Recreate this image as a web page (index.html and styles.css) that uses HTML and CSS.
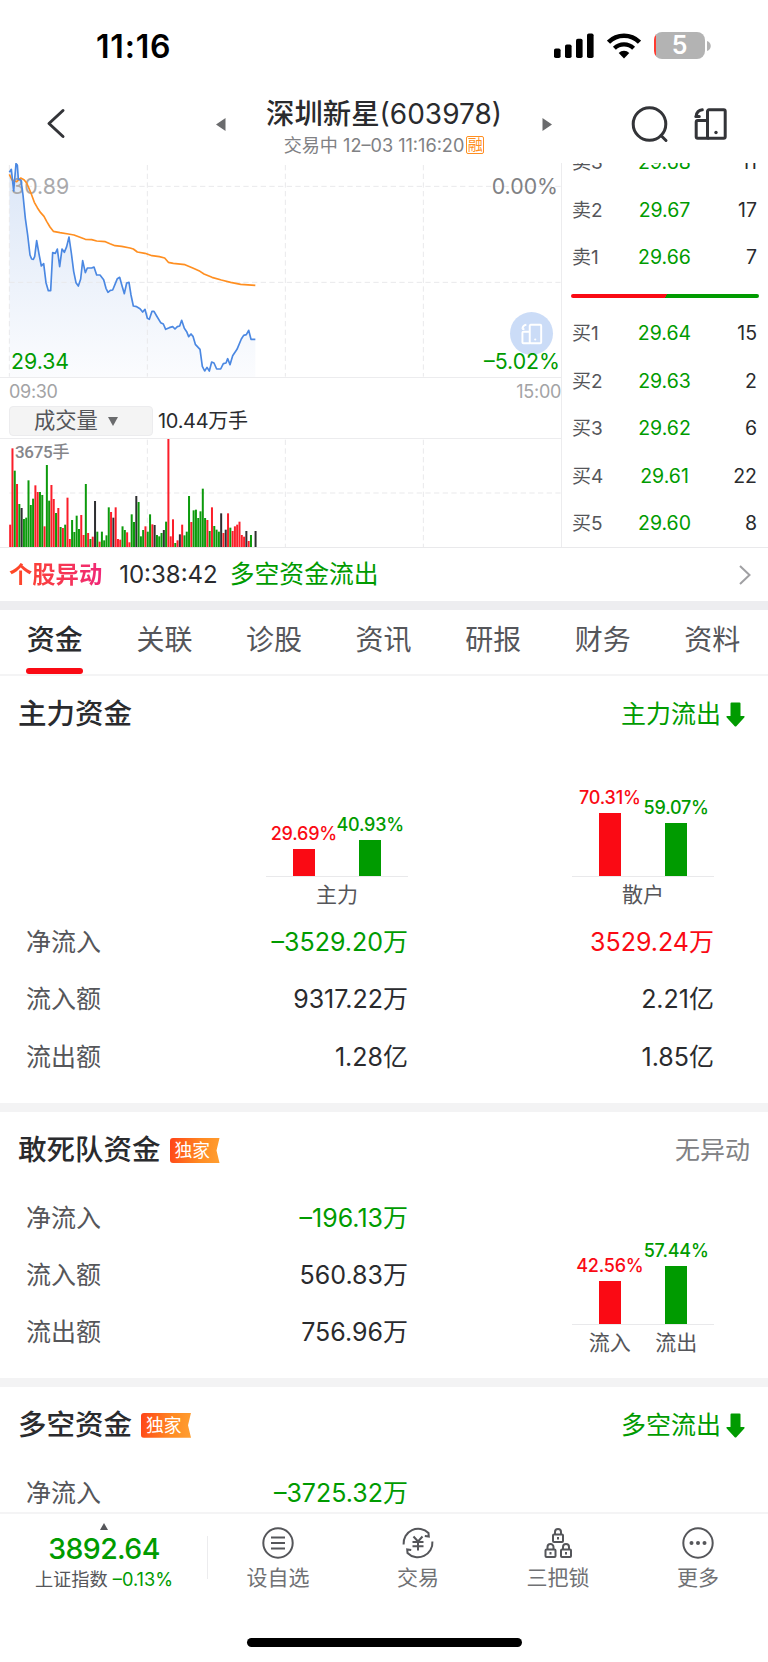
FILE: index.html
```html
<!DOCTYPE html>
<html lang="zh-CN">
<head>
  <meta charset="UTF-8">
  <title>深圳新星(603978)</title>
  <link rel="stylesheet" href="styles.css">
</head>
<body>

<!-- Status bar -->
<div class="status">
  <span class="time">11:16</span>
  <div class="status-icons">
    <svg width="40" height="26" viewBox="0 0 40 26">
      <rect x="0" y="15.5" width="6.6" height="9.5" rx="1.8"/>
      <rect x="11" y="11.5" width="6.6" height="13.5" rx="1.8"/>
      <rect x="22" y="5.8" width="6.6" height="19.2" rx="1.8"/>
      <rect x="33" y="0.5" width="6.6" height="24.5" rx="1.8"/>
    </svg>
    <svg class="wifi" width="34" height="26" viewBox="0 0 34 26">
      <path d="M1.500 9.200a22 22 0 0 1 31 0" fill="none" stroke="#000" stroke-width="4.600"/>
      <path d="M7.4 15.300a13.700 13.700 0 0 1 19.200 0" fill="none" stroke="#000" stroke-width="4.200"/>
      <path d="M17 25.500l-5.300-5.600a7.600 7.600 0 0 1 10.600 0z"/>
    </svg>
    <div class="battery">5</div>
    <svg width="4" height="10" viewBox="0 0 4 10"><path d="M0 0c5 1.800 5 8.200 0 10z" fill="#b3b3b3"/></svg>
  </div>
</div>

<!-- Stock title -->
<div class="nav">
  <svg class="back" width="20" height="32" viewBox="0 0 20 32"><path d="M17 3L3 16l14 13" transform="translate(0 .5)"/></svg>
  <svg class="prev" width="10" height="13" viewBox="0 0 10 13"><path d="M9.500 0v13L0 6.500z"/></svg>
  <div class="nav-title">
    <div class="stock">深圳新星<span class="code">(603978)</span></div>
    <div class="stock-sub">交易中 12–03 11:16:20<span class="rong">融</span></div>
  </div>
  <svg class="next" width="10" height="13" viewBox="0 0 10 13"><path d="M.5 0v13L10 6.500z"/></svg>
  <svg class="search" width="38" height="38" viewBox="0 0 38 38"><circle cx="18.500" cy="18" r="16.300"/><path d="M30 29.500l5 5"/></svg>
  <svg class="layout" width="34" height="34" viewBox="0 0 34 34">
    <rect x="13.500" y="2.800" width="17.700" height="28.500" rx="1.500"/>
    <path d="M13.500 13.500H3.700a1.500 1.500 0 0 0-1.500 1.500v14.800a1.500 1.500 0 0 0 1.500 1.500H14M1.800 9.500h3.500M2.200 9C2.600 5.600 4.800 3.200 8.300 2.800"/>
    <circle class="dot" cx="22" cy="25.500" r="1.700"/>
  </svg>
</div>

<div class="quote">
  <div class="charts">
    <!-- Price chart -->
    <div class="price-chart">
      <svg width="562" height="215" viewBox="0 24 1686 645">
        <defs>
          <linearGradient id="area" x1="0" y1="0" x2="0" y2="1">
            <stop offset="0" stop-color="#dbe6f7"/>
            <stop offset="1" stop-color="#fbfcfe"/>
          </linearGradient>
        </defs>
        <path id="areaPath" fill="url(#area)"/>
        <g class="grid-lines">
          <path d="M28 30V665M442 30V665M856 30V665M1270 30V665"/>
          <path d="M28 94H1684M28 382H1684"/>
        </g>
      </svg>
      <span class="label high">30.89</span>
      <span class="label pct-high">0.00%</span>
      <span class="label low">29.34</span>
      <svg class="lines" width="562" height="215" viewBox="0 24 1686 645">
        <polyline id="avgLine" stroke="#ff8f21" points="28,58 36,75 50,80 62,69 72,74 80,84 92,112 103,142 112,158 122,173 132,184 140,199 150,216 160,229 180,233 205,237 222,240 240,247 256,253 275,254 290,258 316,260 330,266 345,272 365,274 390,279 400,282 412,291 435,295 456,302 478,305 494,309 505,322 520,325 555,329 580,340 600,349 612,357 636,367 664,375 692,382 722,388 766,391"/>
        <polyline id="priceLine" stroke="#4b88e2" points="28,52 34,43 41,108 48,26 52,30 55,73 63,76 69,120 76,190 83,240 90,300 95,312 100,313 104,305 110,257 117,297 124,333 131,326 138,383 145,407 152,407 158,293 166,295 172,282 179,335 186,282 193,292 200,275 207,246 214,294 221,349 228,383 235,393 242,372 248,317 256,353 262,339 275,339 282,336 290,360 300,360 311,374 318,400 324,412 331,406 338,405 345,388 352,371 359,367 366,392 373,416 380,384 387,382 393,420 400,453 410,455 420,461 428,471 435,463 442,490 448,493 456,469 462,469 470,483 482,503 490,507 497,523 508,518 518,515 525,522 532,515 539,513 545,496 553,520 560,530 566,545 573,537 579,544 586,568 600,583 607,634 614,648 621,637 628,648 635,621 642,624 650,642 662,642 670,626 678,624 683,611 690,629 698,602 711,583 724,552 731,541 739,539 746,526 753,553 766,553"/>
      </svg>
      <div class="float-btn">
        <svg width="22" height="22" viewBox="0 0 34 34">
          <rect x="13.500" y="2.800" width="17.700" height="28.500" rx="1.500"/>
          <path d="M13.500 13.500H3.700a1.500 1.500 0 0 0-1.500 1.500v14.800a1.500 1.500 0 0 0 1.500 1.500H14M1.800 9.500h3.500M2.200 9C2.600 5.600 4.800 3.200 8.300 2.800"/>
          <circle class="dot" cx="22" cy="25.500" r="1.700"/>
        </svg>
      </div>
      <span class="label pct-low">–5.02%</span>
    </div>
    <div class="axis"><span>09:30</span><span>15:00</span></div>
    <div class="vol-head">
      <div class="vol-select">成交量<svg width="10" height="9" viewBox="0 0 10 9"><path d="M0 0h10L5 9z" fill="#6a6b6d"/></svg></div>
      <span class="vol-total">10.44万手</span>
    </div>
    <!-- Volume chart -->
    <div class="vol-chart">
      <svg width="562" height="108" viewBox="0 192 1686 324">
        <g class="grid-lines">
          <path d="M442 194V516M856 194V516M1270 194V516"/>
          <path d="M28 354H1684"/>
        </g>
        <g id="volBars"></g>
      </svg>
      <span class="vol-max">3675手</span>
    </div>
  </div>

  <!-- Order book -->
  <div class="book">
    <div class="book-row"><span>卖3</span><b>29.68</b><i>11</i></div>
    <div class="book-row"><span>卖2</span><b>29.67</b><i>17</i></div>
    <div class="book-row"><span>卖1</span><b>29.66</b><i>7</i></div>
    <div class="ratio"></div>
    <div class="book-row"><span>买1</span><b>29.64</b><i>15</i></div>
    <div class="book-row"><span>买2</span><b>29.63</b><i>2</i></div>
    <div class="book-row"><span>买3</span><b>29.62</b><i>6</i></div>
    <div class="book-row"><span>买4</span><b>29.61</b><i>22</i></div>
    <div class="book-row"><span>买5</span><b>29.60</b><i>8</i></div>
  </div>
</div>

<div class="alert">
  <span class="alert-tag">个股异动</span>
  <span class="alert-time">10:38:42</span>
  <span class="alert-text">多空资金流出</span>
  <svg width="14" height="24" viewBox="0 0 14 24"><path d="M2 3l9.500 9L2 21" fill="none" stroke="#a0a0a3" stroke-width="2"/></svg>
</div>

<div class="tabs">
  <span class="tab active">资金</span>
  <span class="tab">关联</span>
  <span class="tab">诊股</span>
  <span class="tab">资讯</span>
  <span class="tab">研报</span>
  <span class="tab">财务</span>
  <span class="tab">资料</span>
</div>

<div class="content">
  <!-- Main funds -->
  <div class="section">
    <div class="section-head">
      <h2>主力资金</h2>
      <span class="flow down">主力流出<svg width="19" height="25" viewBox="0 0 19 25"><path d="M4.500 1.500a1 1 0 0 1 1-1h8a1 1 0 0 1 1 1V14h3.200q1.600.2.600 1.400L10.500 24q-1 1-2 0L.7 15.400Q-.3 14.200 1.300 14h3.200z"/></svg></span>
    </div>
    <div class="funds with-bars">
      <div class="bars main-bars">
        <div class="plot">
          <div class="bar red" style="--h:27px">29.69%</div>
          <div class="bar green" style="--h:36.500px">40.93%</div>
        </div>
        <div class="bar-names"><span>主力</span></div>
      </div>
      <div class="bars">
        <div class="plot">
          <div class="bar red" style="--h:63px">70.31%</div>
          <div class="bar green" style="--h:53px">59.07%</div>
        </div>
        <div class="bar-names"><span>散户</span></div>
      </div>
      <span class="name">净流入</span><span class="num down">–3529.20万</span><span class="num up">3529.24万</span>
      <span class="name">流入额</span><span class="num">9317.22万</span><span class="num">2.21亿</span>
      <span class="name">流出额</span><span class="num">1.28亿</span><span class="num">1.85亿</span>
    </div>
  </div>

  <!-- Hot money -->
  <div class="section">
    <div class="section-head">
      <h2>敢死队资金</h2><span class="badge">独家</span>
      <span class="flow none">无异动</span>
    </div>
    <div class="funds">
      <span class="name">净流入</span><span class="num down">–196.13万</span>
      <span class="name">流入额</span><span class="num">560.83万</span>
      <span class="name">流出额</span><span class="num">756.96万</span>
      <div class="bars side-bars">
        <div class="plot">
          <div class="bar red" style="--h:42.500px">42.56%</div>
          <div class="bar green" style="--h:57.500px">57.44%</div>
        </div>
        <div class="bar-names"><span>流入</span><span>流出</span></div>
      </div>
    </div>
  </div>

  <!-- Long / short funds -->
  <div class="section">
    <div class="section-head">
      <h2>多空资金</h2><span class="badge">独家</span>
      <span class="flow down">多空流出<svg width="19" height="25" viewBox="0 0 19 25"><path d="M4.500 1.500a1 1 0 0 1 1-1h8a1 1 0 0 1 1 1V14h3.200q1.600.2.600 1.400L10.500 24q-1 1-2 0L.7 15.400Q-.3 14.200 1.300 14h3.200z"/></svg></span>
    </div>
    <div class="funds">
      <span class="name">净流入</span><span class="num down">–3725.32万</span>
    </div>
  </div>
</div>

<!-- Bottom bar -->
<div class="bottom">
  <div class="index">
    <svg width="8" height="7" viewBox="0 0 8 7"><path d="M4 0l4 7H0z" fill="#55565a"/></svg>
    <div class="index-value">3892.64</div>
    <div class="index-name">上证指数 <span>–0.13%</span></div>
  </div>
  <div class="action">
    <svg width="34" height="34" viewBox="0 0 34 34"><circle cx="17" cy="17" r="14.700"/><path d="M10 11.500h14M10 17h14M10 22.500h14"/></svg>
    设自选
  </div>
  <div class="action">
    <svg width="34" height="34" viewBox="0 0 34 34">
      <path d="M2.600 18.500A14.600 14.600 0 0 1 27.500 7l.3 3.600-4-.6M31.400 15.500A14.600 14.600 0 0 1 6.500 27l-.3-3.600 4 .6"/>
      <path d="M12.500 10.500l4.500 5 4.500-5M17 15.500v9M11.500 16h11M11.500 20.300h11"/>
    </svg>
    交易
  </div>
  <div class="action">
    <svg width="34" height="34" viewBox="0 0 34 34">
      <rect x="12" y="8.500" width="10" height="7.500" rx="1"/><path d="M14 8.500V6a3 3 0 0 1 6 0v2.500M17 11v2.500"/>
      <rect x="4.500" y="23.500" width="10" height="7.500" rx="1"/><path d="M6.500 23.500V21a3 3 0 0 1 6 0v2.500M9.500 26v2.500"/>
      <rect x="20" y="23.500" width="10" height="7.500" rx="1"/><path d="M22 23.500V21a3 3 0 0 1 6 0v2.500M25 26v2.500"/>
    </svg>
    三把锁
  </div>
  <div class="action">
    <svg width="34" height="34" viewBox="0 0 34 34"><circle cx="17" cy="17" r="14.700"/><g class="dot"><circle cx="10.500" cy="17" r="2"/><circle cx="17" cy="17" r="2"/><circle cx="23.500" cy="17" r="2"/></g></svg>
    更多
  </div>
</div>
<div class="home-bar"></div>

<script src="chart.js"></script>
</body>
</html>
```

FILE: styles.css
```css
* {
  box-sizing: border-box;
}

body {
  margin: 0;
  width: 768px;
  height: 1662px;
  overflow: hidden;
  display: flex;
  flex-direction: column;
  background: #fff;
  color: #2a2b2e;
  font-family: Inter, "Noto Sans CJK SC", sans-serif;
  line-height: 1;
}

svg {
  display: block;
  flex: none;
}

.down {
  color: #009b00;
}

.up {
  color: #fa0a14;
}

/* status bar */
.status {
  height: 92px;
  display: flex;
  justify-content: space-between;
  padding: 0 57px 0 96px;
  flex: none;
}

.time {
  font-size: 32px;
  font-weight: 600;
  letter-spacing: 0.800px;
  color: #000;
  margin-top: 31px;
}

.status-icons {
  display: flex;
  align-items: center;
  height: 27px;
  margin-top: 32px;
}

.wifi {
  margin: 0 13px;
}

.battery {
  width: 51px;
  height: 27px;
  border-radius: 8px;
  background: linear-gradient(to right, #ff3b30 2px, #b3b3b3 2px);
  color: #fff;
  font-size: 25px;
  font-weight: 600;
  line-height: 27px;
  text-align: center;
  margin-right: 2px;
}

/* title */
.nav {
  height: 71px;
  display: flex;
  padding-left: 46px;
  flex: none;
}

.nav svg {
  fill: none;
  stroke: #333438;
  stroke-width: 3;
  stroke-linecap: round;
  stroke-linejoin: round;
}

.nav .dot {
  fill: #333438;
  stroke: none;
}

.nav .back {
  margin-top: 15px;
}

.nav .prev,
.nav .next {
  fill: #6a6b6d;
  stroke: none;
  margin-top: 26px;
}

.nav .prev {
  margin-left: 150px;
}

.nav .search {
  margin: 14px 0 0 79px;
}

.nav .layout {
  margin: 15px 0 0 25px;
}

.nav-title {
  width: 316px;
  text-align: center;
  white-space: nowrap;
}

.stock {
  font-size: 28.400px;
  font-weight: 500;
  line-height: 36px;
  margin-top: 4px;
}

.code {
  font-size: 28px;
  font-weight: 400;
}

.stock-sub {
  display: flex;
  justify-content: center;
  font-size: 18.100px;
  line-height: 20px;
  color: #808184;
  margin-top: 3px;
  white-space: pre;
}

.rong {
  width: 18px;
  height: 18px;
  margin: 1px 0 0 2px;
  border: 1px solid #ff8f21;
  border-radius: 2px;
  color: #ff8f21;
  font-size: 15px;
  line-height: 15px;
}

/* quote */
.quote {
  display: flex;
  height: 385px;
  border-bottom: 1px solid #e9e9eb;
  flex: none;
}

.charts {
  width: 562px;
  border-right: 1px solid #ececee;
}

.price-chart {
  position: relative;
  height: 215px;
  border-bottom: 1px solid #ececee;
}

.grid-lines path {
  fill: none;
  stroke: #e9e9eb;
  stroke-width: 3;
  stroke-dasharray: 16 10;
}

.lines {
  position: absolute;
  top: 0;
  left: 0;
}

.lines polyline {
  fill: none;
  stroke-width: 5;
  stroke-linejoin: round;
}

.label {
  position: absolute;
  font-size: 21.300px;
  line-height: 24px;
}

.high {
  top: 11px;
  left: 11px;
  color: #a9a9ab;
}

.pct-high {
  top: 11px;
  right: 3px;
  color: #808184;
}

.low {
  bottom: 4px;
  left: 11px;
  color: #009b00;
}

.pct-low {
  bottom: 4px;
  right: 1px;
  color: #009b00;
}

.float-btn {
  position: absolute;
  top: 149px;
  left: 510px;
  width: 43px;
  height: 43px;
  border-radius: 50%;
  background: #cbdcf7;
  display: flex;
  align-items: center;
  justify-content: center;
}

.float-btn svg {
  fill: none;
  stroke: #fff;
  stroke-width: 3;
}

.float-btn .dot {
  fill: #fff;
  stroke: none;
}

.axis {
  display: flex;
  justify-content: space-between;
  height: 28px;
  padding: 4px 0 0 9px;
  font-size: 18px;
  line-height: 20px;
  letter-spacing: -0.300px;
  color: #a3a3a5;
}

.vol-head {
  display: flex;
  height: 32px;
  padding-left: 9px;
}

.vol-select {
  display: flex;
  align-items: center;
  gap: 10px;
  width: 144px;
  height: 30px;
  padding-left: 24px;
  border: 1px solid #ececee;
  border-radius: 4px;
  background: #f4f4f4;
  color: #55565a;
  font-size: 21.300px;
}

.vol-total {
  margin-left: 5px;
  font-size: 20px;
  line-height: 31px;
  letter-spacing: -0.300px;
}

.vol-chart {
  position: relative;
  height: 109px;
  border-top: 1px solid #ececee;
}

.vol-max {
  position: absolute;
  top: 3px;
  left: 15px;
  font-family: Roboto, "Noto Sans CJK SC", sans-serif;
  font-size: 17px;
  line-height: 20px;
  letter-spacing: -0.300px;
  font-weight: 500;
  color: #85868a;
}

.book {
  flex: 1;
  overflow: hidden;
  padding: 0 11px 0 10px;
}

.book-row {
  display: grid;
  grid-template-columns: 60px 65px 1fr;
  height: 47.500px;
  line-height: 47.500px;
  font-size: 19.500px;
}

.book-row:first-child {
  margin-top: -24px;
}

.book-row span {
  font-size: 19px;
  color: #55565a;
}

.book-row b {
  font-weight: 400;
  text-align: center;
  color: #009b00;
}

.book-row i {
  font-style: normal;
  text-align: right;
}

.ratio {
  height: 4px;
  width: 188px;
  margin: 12px 0 12.500px -1px;
  border-radius: 2px;
  background: linear-gradient(115deg, #fa0a14 50.500%, #009b00 50.500%);
}

/* alert */
.alert {
  display: flex;
  align-items: center;
  height: 53px;
  padding: 0 16px 0 9px;
  flex: none;
}

.alert-tag {
  font-size: 23.300px;
  font-weight: 700;
  background: linear-gradient(to right, #ff4a22, #f02878);
  -webkit-background-clip: text;
  color: transparent;
}

.alert-time {
  margin-left: 17px;
  font-size: 24px;
}

.alert-text {
  margin-left: 12px;
  font-size: 24.800px;
  color: #009b00;
}

.alert svg {
  margin-left: auto;
}

/* tabs */
.tabs {
  display: flex;
  height: 75px;
  border-top: 9px solid #ededf0;
  border-bottom: 2px solid #f4f4f5;
  flex: none;
}

.tab {
  width: 109.600px;
  line-height: 60px;
  text-align: center;
  font-size: 28px;
  color: #55565a;
}

.tab.active {
  font-weight: 500;
  color: #2a2b2e;
}

.tab.active::after {
  content: "";
  display: block;
  width: 57px;
  height: 6px;
  margin: -2px auto 0;
  border-radius: 3px;
  background: #fa0a14;
}

/* fund sections */
.content {
  flex: 1;
  min-height: 0;
  overflow: hidden;
}

.section {
  padding-bottom: 17px;
  border-bottom: 9px solid #f3f3f4;
}

.section-head {
  display: flex;
  align-items: center;
  height: 77px;
  padding: 0 18px;
}

.section-head h2 {
  margin: 0;
  font-size: 28.500px;
  font-weight: 500;
}

.badge {
  width: 50px;
  height: 25px;
  margin-left: 9px;
  padding-left: 5px;
  border-radius: 3px 0 0 3px;
  background: linear-gradient(100deg, #ff4318, #ff8a22 60%, #ffa032);
  clip-path: polygon(0 0, 100% 0, 94% 50%, 100% 100%, 0 100%);
  color: #fff;
  font-size: 17.800px;
  line-height: 25px;
}

.flow {
  display: flex;
  align-items: center;
  gap: 5px;
  margin-left: auto;
  padding-right: 5px;
  font-size: 25px;
}

.flow svg {
  fill: #009b00;
}

.flow.none {
  padding-right: 0;
  color: #808184;
}

.funds {
  display: grid;
  grid-template-columns: 240px 142px 306px;
  grid-auto-rows: 57.300px;
  padding-left: 26px;
}

.funds.with-bars {
  grid-template-rows: 160px;
  padding-bottom: 1px;
}

.name,
.num {
  font-size: 25px;
  line-height: 59px;
}

.name {
  grid-column: 1;
  color: #55565a;
}

.num {
  grid-column: 2;
  text-align: right;
  white-space: nowrap;
}

.num + .num {
  grid-column: 3;
}

.bars {
  grid-column: 3;
  width: 142px;
  justify-self: end;
  align-self: end;
  margin-bottom: -1px;
}

.main-bars {
  grid-column: 2;
}

.side-bars {
  grid-row: 1 / 4;
}

.plot {
  display: flex;
  justify-content: center;
  align-items: flex-end;
  border-bottom: 1px solid #e9e9eb;
}

.bar {
  display: flex;
  flex-direction: column;
  align-items: center;
  gap: 6px;
  width: 66.300px;
  font-size: 18px;
  font-weight: 500;
  letter-spacing: -0.200px;
}

.bar::after {
  content: "";
  width: 21.700px;
  height: var(--h);
}

.red {
  color: #fa0a14;
}

.green {
  color: #009b00;
}

.red::after {
  background: #fa0a14;
}

.green::after {
  background: #009b00;
}

.bar-names {
  display: flex;
  justify-content: center;
  height: 37px;
  font-size: 21px;
  line-height: 36px;
  color: #55565a;
}

.bar-names span {
  width: 66.300px;
  text-align: center;
}

/* bottom bar */
.bottom {
  display: flex;
  height: 100px;
  border-top: 2px solid #f4f4f5;
  flex: none;
}

.index {
  display: flex;
  flex-direction: column;
  align-items: center;
  width: 208px;
  padding-top: 9px;
  background: linear-gradient(#ececee, #ececee) right 22px / 1px 43px no-repeat;
}

.index-value {
  margin-top: 2px;
  font-size: 28.500px;
  font-weight: 500;
  line-height: 34px;
  letter-spacing: -0.600px;
  color: #009b00;
}

.index-name {
  margin-top: 1px;
  font-size: 18.200px;
  line-height: 24px;
  color: #55565a;
}

.index-name span {
  color: #009b00;
}

.action {
  display: flex;
  flex-direction: column;
  align-items: center;
  gap: 6px;
  width: 140px;
  padding-top: 12px;
  font-size: 21px;
  line-height: 24px;
  color: #707174;
}

.action svg {
  fill: none;
  stroke: #55565a;
  stroke-width: 2;
}

.action .dot {
  fill: #55565a;
  stroke: none;
}

.home-bar {
  width: 275px;
  height: 9px;
  margin: 26px auto 15px;
  border-radius: 5px;
  background: #000;
  flex: none;
}
```

FILE: chart.js
```js
// bar top and colour (r up, g down, k flat) for every minute since 09:30
const volumes = `449r 220r 287g 327r 387g 399k 432g 428g 316g 390g 371g 331r 351r 351g 360g 454r
270g 377g 330r 372r 414g 399r 456g 459r 449g 368r 492r 435g 471g 422g 462g 420r 480r 327g 474r
492g 485r 378k 470g 500r 470g 496g 481g 397g 411r 428k 397r 492r 494r 454g 465g 472r 502r 418g
441g 363k 381g 484g 465g 454r 470g 418g 448r 450k 480g 484g 474g 465k 440g 192r 484r 433r 504g
496r 478k 449r 481g 470g 363g 441r 406g 404g 429g 409g 341g 429g 435r 468g 397r 453g 464g 470g
415k 474r 464k 415r 458g 468r 454r 449r 440r 480r 485r 468k 498r 480g 516g 468k`.split(/\s+/);

const colors = { r: '#fb1e2a', g: '#0c9a0c', k: '#2e2f31' };
const base = 516;

document.getElementById('volBars').innerHTML = volumes.map((v, i) => {
  const top = parseInt(v);
  const x = 27.5 + i * 6.88;
  return `<rect x="${x.toFixed(1)}" y="${top}" width="6" height="${base - top}" fill="${colors[v.slice(-1)]}"/>`;
}).join('');

// fill under the price line
const points = document.getElementById('priceLine').getAttribute('points');
document.getElementById('areaPath').setAttribute('d', `M${points} L766,666 L28,666 Z`);
```
